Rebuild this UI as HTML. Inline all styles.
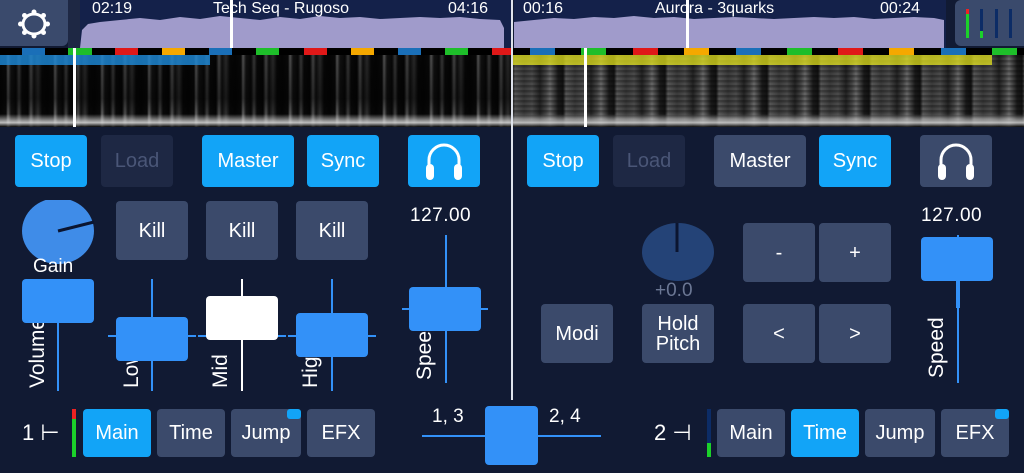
<!DOCTYPE html>
<html><head><meta charset="utf-8"><style>
*{margin:0;padding:0;box-sizing:border-box}
body{width:1024px;height:473px;background:#111a33;position:relative;overflow:hidden;font-family:"Liberation Sans",sans-serif;color:#fff}
.a{position:absolute}
.b{position:absolute;border-radius:4px;background:#3b4a6b;color:#fff;font-size:20px;display:flex;align-items:center;justify-content:center;text-align:center;line-height:20px}
.on{background:#12a4f7}
.dis{background:#1e2844;color:#4a5677}
.th{position:absolute;background:#3391f8;border-radius:4px}
.vl{position:absolute;width:2px;background:#3391f8}
.hl{position:absolute;height:2px;background:#3391f8}
.rt{position:absolute;transform:rotate(-90deg);transform-origin:left top;font-size:21px;white-space:nowrap;color:#fff}
.seg{position:absolute;top:48px;height:7px}
.spec{position:absolute;top:55px;height:72px;background:
linear-gradient(to bottom,rgba(0,0,0,0) 82%,rgba(220,220,220,.85) 94%,rgba(0,0,0,.7) 100%),
linear-gradient(to bottom,rgba(0,0,0,.2) 0%,rgba(0,0,0,.5) 60%,rgba(0,0,0,0) 85%),
repeating-linear-gradient(to right,#050505 0,#0a0a0a 6px,#666 8px,#151515 11px,#080808 16px,#444 19px,#0a0a0a 22px,#050505 28px,#555 31px,#111 34px,#333 38px,#080808 42px,#050505 47px)}
.spec2{position:absolute;top:55px;height:72px;background:
linear-gradient(to bottom,rgba(0,0,0,0) 82%,rgba(220,220,220,.8) 94%,rgba(0,0,0,.7) 100%),
repeating-linear-gradient(to bottom,rgba(0,0,0,.25) 0,rgba(0,0,0,.25) 2px,rgba(0,0,0,0) 3px,rgba(0,0,0,0) 5px),
repeating-linear-gradient(to right,#111 0,#555 3px,#3a3a3a 12px,#4a4a4a 20px,#222 28px,#444 34px,#666 38px,#1a1a1a 46px,#111 51px)}
.small{position:absolute;width:14px;height:10px;background:#12a4f7;border-radius:3px}
</style></head><body>

<div class="a" style="left:0;top:0;width:68px;height:46px;background:#3a4a6c;border-radius:0 0 6px 0"></div>
<svg class="a" style="left:16px;top:8px" width="36" height="32" viewBox="0 0 36 32"><g fill="none" stroke="#fff" stroke-width="3"><ellipse cx="18" cy="16" rx="11" ry="10"/></g><g fill="#fff"><circle cx="18" cy="4" r="2.5"/><circle cx="18" cy="28" r="2.5"/><circle cx="4.5" cy="16" r="2.5"/><circle cx="31.5" cy="16" r="2.5"/><circle cx="8.5" cy="7.5" r="2.5"/><circle cx="27.5" cy="7.5" r="2.5"/><circle cx="8.5" cy="24.5" r="2.5"/><circle cx="27.5" cy="24.5" r="2.5"/></g></svg>
<div class="a" style="left:68px;top:0;width:12px;height:48px;background:#1e2844"></div>
<div class="a" style="left:80px;top:0;width:432px;height:48px;background:#14214a"></div>
<svg class="a" style="left:80px;top:0" width="432" height="48"><polygon fill="#a09bcb" points="0,48 2,30 8,24 20,22 40,20 60,18 80,20 100,17 120,19 140,16 160,18 180,20 200,17 220,19 240,16 260,18 280,17 300,19 320,18 340,17 360,18 380,17 400,19 420,20 424,28 424,48"/><rect x="150" y="0" width="3" height="48" fill="#fff"/></svg>
<div class="a" style="left:92px;top:0;font-size:16px">02:19</div>
<div class="a" style="left:213px;top:0;font-size:16px">Tech Seq - Rugoso</div>
<div class="a" style="left:448px;top:0;font-size:16px">04:16</div>

<div class="a" style="left:514px;top:0;width:432px;height:48px;background:#14214a"></div>
<svg class="a" style="left:514px;top:0" width="432" height="48"><polygon fill="#a09bcb" points="0,48 0,22 20,20 40,18 60,19 80,17 100,18 120,16 140,18 160,17 180,19 200,18 220,17 240,18 260,19 280,18 300,17 320,18 340,17 360,19 380,18 400,17 420,18 430,20 430,48"/><rect x="172" y="0" width="3" height="48" fill="#fff"/></svg>
<div class="a" style="left:523px;top:0;font-size:16px">00:16</div>
<div class="a" style="left:655px;top:0;font-size:16px">Aurora - 3quarks</div>
<div class="a" style="left:880px;top:0;font-size:16px">00:24</div>
<div class="a" style="left:955px;top:0;width:69px;height:46px;background:#3a4a6c;border-radius:6px 0 0 6px"></div>
<div class="a" style="left:966px;top:9px;width:3px;height:29px;background:#1bd12a;border-top:5px solid #e22"></div>
<div class="a" style="left:980px;top:9px;width:3px;height:29px;background:#0c2c66"></div>
<div class="a" style="left:980px;top:31px;width:3px;height:7px;background:#1bd12a"></div>
<div class="a" style="left:995px;top:9px;width:3px;height:29px;background:#0c2c66"></div>
<div class="a" style="left:1009px;top:9px;width:3px;height:29px;background:#0c2c66"></div>

<div class="a" style="left:0;top:48px;width:1024px;height:7px;background:#000"></div>
<div class="seg" style="left:22px;width:23px;background:#1a6fb8"></div>
<div class="seg" style="left:68px;width:24px;background:#1ebe2a"></div>
<div class="seg" style="left:115px;width:23px;background:#e01818"></div>
<div class="seg" style="left:162px;width:23px;background:#f5a800"></div>
<div class="seg" style="left:209px;width:23px;background:#1a6fb8"></div>
<div class="seg" style="left:256px;width:23px;background:#1ebe2a"></div>
<div class="seg" style="left:304px;width:23px;background:#e01818"></div>
<div class="seg" style="left:351px;width:23px;background:#f5a800"></div>
<div class="seg" style="left:398px;width:23px;background:#1a6fb8"></div>
<div class="seg" style="left:445px;width:23px;background:#1ebe2a"></div>
<div class="seg" style="left:492px;width:20px;background:#e01818"></div>
<div class="seg" style="left:530px;width:25px;background:#1a6fb8"></div>
<div class="seg" style="left:581px;width:25px;background:#1ebe2a"></div>
<div class="seg" style="left:633px;width:25px;background:#e01818"></div>
<div class="seg" style="left:684px;width:25px;background:#f5a800"></div>
<div class="seg" style="left:736px;width:25px;background:#1a6fb8"></div>
<div class="seg" style="left:787px;width:25px;background:#1ebe2a"></div>
<div class="seg" style="left:838px;width:25px;background:#e01818"></div>
<div class="seg" style="left:889px;width:25px;background:#f5a800"></div>
<div class="seg" style="left:941px;width:25px;background:#1a6fb8"></div>
<div class="seg" style="left:992px;width:25px;background:#1ebe2a"></div>

<div class="spec" style="left:0;width:512px"></div>
<div class="spec2" style="left:512px;width:512px"></div>
<div class="a" style="left:0;top:55px;width:210px;height:10px;background:rgba(30,140,220,.8)"></div>
<div class="a" style="left:512px;top:55px;width:480px;height:10px;background:rgba(225,225,30,.75)"></div>
<div class="a" style="left:73px;top:48px;width:3px;height:79px;background:#fff"></div>
<div class="a" style="left:584px;top:48px;width:3px;height:79px;background:#fff"></div>
<div class="a" style="left:511px;top:0;width:2px;height:400px;background:#dfe3ec"></div>

<div class="b on" style="left:15px;top:135px;width:72px;height:52px">Stop</div>
<div class="b dis" style="left:101px;top:135px;width:72px;height:52px">Load</div>
<div class="b on" style="left:202px;top:135px;width:92px;height:52px">Master</div>
<div class="b on" style="left:307px;top:135px;width:72px;height:52px">Sync</div>
<div class="b on" style="left:408px;top:135px;width:72px;height:52px"><svg width="44" height="42" viewBox="0 0 44 42"><path d="M7 30 V20 A15 15 0 0 1 37 20 V30" fill="none" stroke="#fff" stroke-width="3"/><rect x="4" y="24" width="8" height="16" rx="4" fill="#fff"/><rect x="32" y="24" width="8" height="16" rx="4" fill="#fff"/></svg></div>

<div class="b on" style="left:527px;top:135px;width:72px;height:52px">Stop</div>
<div class="b dis" style="left:613px;top:135px;width:72px;height:52px">Load</div>
<div class="b" style="left:714px;top:135px;width:92px;height:52px">Master</div>
<div class="b on" style="left:819px;top:135px;width:72px;height:52px">Sync</div>
<div class="b" style="left:920px;top:135px;width:72px;height:52px"><svg width="44" height="42" viewBox="0 0 44 42"><path d="M7 30 V20 A15 15 0 0 1 37 20 V30" fill="none" stroke="#fff" stroke-width="3"/><rect x="4" y="24" width="8" height="16" rx="4" fill="#fff"/><rect x="32" y="24" width="8" height="16" rx="4" fill="#fff"/></svg></div>

<svg class="a" style="left:21px;top:200px" width="74" height="72"><ellipse cx="37" cy="31" rx="36" ry="33" fill="#3f8ce8"/><line x1="37" y1="31" x2="73" y2="22" stroke="#0b1530" stroke-width="3"/></svg>
<div class="a" style="left:33px;top:256px;font-size:19px">Gain</div>
<div class="b" style="left:116px;top:201px;width:72px;height:59px">Kill</div>
<div class="b" style="left:206px;top:201px;width:72px;height:59px">Kill</div>
<div class="b" style="left:296px;top:201px;width:72px;height:59px">Kill</div>
<div class="a" style="left:410px;top:205px;font-size:19px;letter-spacing:.5px">127.00</div>

<div class="vl" style="left:57px;top:323px;height:68px"></div>
<div class="rt" style="left:26px;top:388px">Volume</div>
<div class="th" style="left:22px;top:279px;width:72px;height:44px"></div>

<div class="vl" style="left:151px;top:279px;height:112px"></div>
<div class="hl" style="left:108px;top:335px;width:88px"></div>
<div class="rt" style="left:120px;top:388px">Low</div>
<div class="th" style="left:116px;top:317px;width:72px;height:44px"></div>

<div class="a" style="left:241px;top:279px;width:2px;height:112px;background:#fff"></div>
<div class="hl" style="left:198px;top:335px;width:88px"></div>
<div class="rt" style="left:209px;top:388px">Mid</div>
<div class="a" style="left:206px;top:296px;width:72px;height:44px;background:#fff;border-radius:4px"></div>

<div class="vl" style="left:331px;top:279px;height:112px"></div>
<div class="hl" style="left:288px;top:335px;width:88px"></div>
<div class="rt" style="left:299px;top:388px">High</div>
<div class="th" style="left:296px;top:313px;width:72px;height:44px"></div>

<div class="vl" style="left:445px;top:235px;height:148px"></div>
<div class="hl" style="left:402px;top:308px;width:86px"></div>
<div class="rt" style="left:413px;top:380px">Speed</div>
<div class="th" style="left:409px;top:287px;width:72px;height:44px"></div>

<svg class="a" style="left:641px;top:222px" width="74" height="72"><ellipse cx="37" cy="30" rx="36" ry="29" fill="#244377"/><line x1="36" y1="1" x2="36" y2="30" stroke="#0b1530" stroke-width="3"/></svg>
<div class="a" style="left:655px;top:280px;font-size:19px;color:#6b7794">+0.0</div>
<div class="b" style="left:743px;top:223px;width:72px;height:59px">-</div>
<div class="b" style="left:819px;top:223px;width:72px;height:59px">+</div>
<div class="b" style="left:541px;top:304px;width:72px;height:59px">Modi</div>
<div class="b" style="left:642px;top:304px;width:72px;height:59px">Hold<br>Pitch</div>
<div class="b" style="left:743px;top:304px;width:72px;height:59px">&lt;</div>
<div class="b" style="left:819px;top:304px;width:72px;height:59px">&gt;</div>
<div class="a" style="left:921px;top:205px;font-size:19px;letter-spacing:.5px">127.00</div>
<div class="vl" style="left:957px;top:235px;height:148px"></div>
<div class="vl" style="left:956px;top:280px;height:28px;width:4px"></div>
<div class="rt" style="left:925px;top:378px">Speed</div>
<div class="th" style="left:921px;top:237px;width:72px;height:44px"></div>

<div class="a" style="left:22px;top:420px;font-size:22px">1 ⊢</div>
<div class="a" style="left:72px;top:409px;width:4px;height:48px;background:#1bd12a;border-top:10px solid #e22"></div>
<div class="b on" style="left:83px;top:409px;width:68px;height:48px">Main</div>
<div class="b" style="left:157px;top:409px;width:68px;height:48px">Time</div>
<div class="b" style="left:231px;top:409px;width:70px;height:48px">Jump</div>
<div class="small" style="left:287px;top:409px"></div>
<div class="b" style="left:307px;top:409px;width:68px;height:48px">EFX</div>

<div class="hl" style="left:422px;top:435px;width:179px"></div>
<div class="a" style="left:432px;top:406px;font-size:19px">1, 3</div>
<div class="a" style="left:549px;top:406px;font-size:19px">2, 4</div>
<div class="th" style="left:485px;top:406px;width:53px;height:59px"></div>

<div class="a" style="left:654px;top:420px;font-size:22px">2 ⊣</div>
<div class="a" style="left:707px;top:409px;width:4px;height:48px;background:#0c2c66"></div>
<div class="a" style="left:707px;top:443px;width:4px;height:14px;background:#1bd12a"></div>
<div class="b" style="left:717px;top:409px;width:68px;height:48px">Main</div>
<div class="b on" style="left:791px;top:409px;width:68px;height:48px">Time</div>
<div class="b" style="left:865px;top:409px;width:70px;height:48px">Jump</div>
<div class="b" style="left:941px;top:409px;width:68px;height:48px">EFX</div>
<div class="small" style="left:995px;top:409px"></div>
</body></html>
